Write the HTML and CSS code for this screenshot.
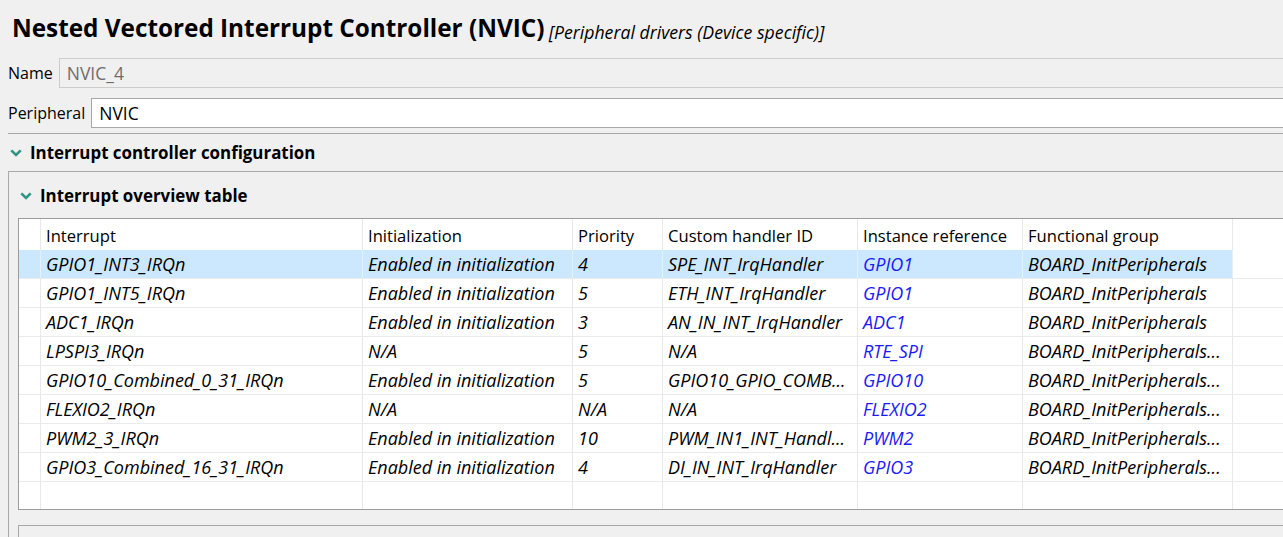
FILE: index.html
```html
<!DOCTYPE html>
<html lang="en">
<head>
<meta charset="utf-8">
<title>NVIC</title>
<link rel="stylesheet" href="styles.css">
</head>
<body>
<div class="page">
  <h1 class="title">Nested Vectored Interrupt Controller (NVIC) <span class="subtitle">[Peripheral drivers (Device specific)]</span></h1>

  <div class="field field-name">
    <span class="label">Name</span>
    <div class="input input-disabled">NVIC_4</div>
  </div>
  <div class="field field-periph">
    <span class="label">Peripheral</span>
    <div class="input">NVIC</div>
  </div>

  <div class="section">
    <div class="section-head">
      <svg class="chev" width="12" height="8" viewBox="0 0 12 8"><polyline points="1.3,1.3 6,6 10.7,1.3" /></svg>
      <span>Interrupt controller configuration</span>
    </div>

    <div class="group">
      <div class="group-head">
        <svg class="chev" width="12" height="8" viewBox="0 0 12 8"><polyline points="1.3,1.3 6,6 10.7,1.3" /></svg>
        <span>Interrupt overview table</span>
      </div>

      <div class="table">
        <div class="row head">
          <div class="cell"></div>
          <div class="cell">Interrupt</div>
          <div class="cell">Initialization</div>
          <div class="cell">Priority</div>
          <div class="cell">Custom handler ID</div>
          <div class="cell">Instance reference</div>
          <div class="cell">Functional group</div>
          <div class="cell fill"></div>
        </div>
        <div class="row selected">
          <div class="cell"></div>
          <div class="cell">GPIO1_INT3_IRQn</div>
          <div class="cell">Enabled in initialization</div>
          <div class="cell">4</div>
          <div class="cell">SPE_INT_IrqHandler</div>
          <div class="cell link">GPIO1</div>
          <div class="cell">BOARD_InitPeripherals</div>
          <div class="cell fill"></div>
        </div>
        <div class="row">
          <div class="cell"></div>
          <div class="cell">GPIO1_INT5_IRQn</div>
          <div class="cell">Enabled in initialization</div>
          <div class="cell">5</div>
          <div class="cell">ETH_INT_IrqHandler</div>
          <div class="cell link">GPIO1</div>
          <div class="cell">BOARD_InitPeripherals</div>
          <div class="cell fill"></div>
        </div>
        <div class="row">
          <div class="cell"></div>
          <div class="cell">ADC1_IRQn</div>
          <div class="cell">Enabled in initialization</div>
          <div class="cell">3</div>
          <div class="cell">AN_IN_INT_IrqHandler</div>
          <div class="cell link">ADC1</div>
          <div class="cell">BOARD_InitPeripherals</div>
          <div class="cell fill"></div>
        </div>
        <div class="row">
          <div class="cell"></div>
          <div class="cell">LPSPI3_IRQn</div>
          <div class="cell">N/A</div>
          <div class="cell">5</div>
          <div class="cell">N/A</div>
          <div class="cell link">RTE_SPI</div>
          <div class="cell">BOARD_InitPeripherals...</div>
          <div class="cell fill"></div>
        </div>
        <div class="row">
          <div class="cell"></div>
          <div class="cell">GPIO10_Combined_0_31_IRQn</div>
          <div class="cell">Enabled in initialization</div>
          <div class="cell">5</div>
          <div class="cell">GPIO10_GPIO_COMB...</div>
          <div class="cell link">GPIO10</div>
          <div class="cell">BOARD_InitPeripherals...</div>
          <div class="cell fill"></div>
        </div>
        <div class="row">
          <div class="cell"></div>
          <div class="cell">FLEXIO2_IRQn</div>
          <div class="cell">N/A</div>
          <div class="cell">N/A</div>
          <div class="cell">N/A</div>
          <div class="cell link">FLEXIO2</div>
          <div class="cell">BOARD_InitPeripherals...</div>
          <div class="cell fill"></div>
        </div>
        <div class="row">
          <div class="cell"></div>
          <div class="cell">PWM2_3_IRQn</div>
          <div class="cell">Enabled in initialization</div>
          <div class="cell">10</div>
          <div class="cell">PWM_IN1_INT_Handl...</div>
          <div class="cell link">PWM2</div>
          <div class="cell">BOARD_InitPeripherals...</div>
          <div class="cell fill"></div>
        </div>
        <div class="row">
          <div class="cell"></div>
          <div class="cell">GPIO3_Combined_16_31_IRQn</div>
          <div class="cell">Enabled in initialization</div>
          <div class="cell">4</div>
          <div class="cell">DI_IN_INT_IrqHandler</div>
          <div class="cell link">GPIO3</div>
          <div class="cell">BOARD_InitPeripherals...</div>
          <div class="cell fill"></div>
        </div>
        <div class="row empty">
          <div class="cell"></div>
          <div class="cell"></div>
          <div class="cell"></div>
          <div class="cell"></div>
          <div class="cell"></div>
          <div class="cell"></div>
          <div class="cell"></div>
          <div class="cell fill"></div>
        </div>
      </div>

      <div class="next-box"></div>
    </div>
  </div>
</div>
</body>
</html>
```

FILE: styles.css
```css
html, body {
  margin: 0;
  padding: 0;
  overflow: hidden;
  background: #f0f0f0;
}

body {
  font-family: "Open Sans", "Noto Sans", sans-serif;
  color: #000;
  height: 537px;
}

.page {
  width: 1310px;
  height: 537px;
}

.title {
  margin: 0;
  padding: 13px 0 0 12px;
  height: 44px;
  box-sizing: border-box;
  font-size: 24.3px;
  line-height: 30px;
  font-weight: 700;
  white-space: nowrap;
}

.subtitle {
  font-size: 17.7px;
  font-weight: 400;
  font-style: italic;
  vertical-align: -2px;
  margin-left: -2px;
}

.field {
  display: flex;
  align-items: center;
  padding-left: 8px;
  gap: 6px;
  font-size: 16px;
}

.field-name {
  margin-top: 14px;
}

.field-periph {
  margin-top: 10px;
}

.label {
  white-space: nowrap;
}

.input {
  flex: 1;
  height: 30px;
  box-sizing: border-box;
  border: 1px solid #a8a8a8;
  background: #fff;
  padding-left: 7px;
  font-size: 17.5px;
  line-height: 28px;
}

.input-disabled {
  background: #f0f0f0;
  border-color: #cccccc;
  color: #6d6d6d;
}

.section {
  margin-top: 5px;
  margin-left: 8px;
  border-top: 1px solid #a9a9a9;
}

.section-head {
  display: flex;
  align-items: center;
  height: 37px;
  padding-left: 2px;
  gap: 8px;
  font-size: 16.9px;
  font-weight: 700;
  box-sizing: border-box;
}

.chev polyline {
  fill: none;
  stroke: #2f9583;
  stroke-width: 2.6;
  stroke-linecap: butt;
}

.group {
  border-top: 1px solid #a9a9a9;
  border-left: 1px solid #a9a9a9;
  height: 366px;
}

.group-head {
  display: flex;
  align-items: center;
  height: 46px;
  padding-left: 11px;
  padding-top: 1px;
  box-sizing: border-box;
  gap: 8px;
  font-size: 16.9px;
  font-weight: 700;
}

.table {
  margin-left: 9px;
  border: 1px solid #9c9c9c;
  border-right: none;
  background: #fff;
}

.row {
  display: grid;
  grid-template-columns: 22px 322px 210px 90px 195px 165px 210px 1fr;
  height: 29px;
  border-bottom: 1px solid #ebebeb;
  box-sizing: border-box;
}

.row.head {
  height: 31px;
  border-bottom: none;
}

.row.empty {
  height: 27px;
  border-bottom: none;
}

.cell {
  border-right: 1px solid #e8e8e8;
  padding: 1px 0 0 5px;
  font-style: italic;
  font-size: 18px;
  line-height: 27px;
  white-space: nowrap;
  overflow: hidden;
}

.head .cell {
  font-style: normal;
  font-size: 16.6px;
  line-height: 29px;
  padding-top: 2px;
}

.cell.fill {
  border-right: none;
}

.selected .cell {
  background: #cce8ff;
  border-right-color: #e4f1fb;
}

.selected .cell.fill {
  background: #fff;
  border-right: none;
}

.link {
  color: #1a1af8;
}

.next-box {
  margin-top: 15px;
  margin-left: 9px;
  height: 20px;
  border-top: 1px solid #a9a9a9;
  border-left: 1px solid #a9a9a9;
}
```
